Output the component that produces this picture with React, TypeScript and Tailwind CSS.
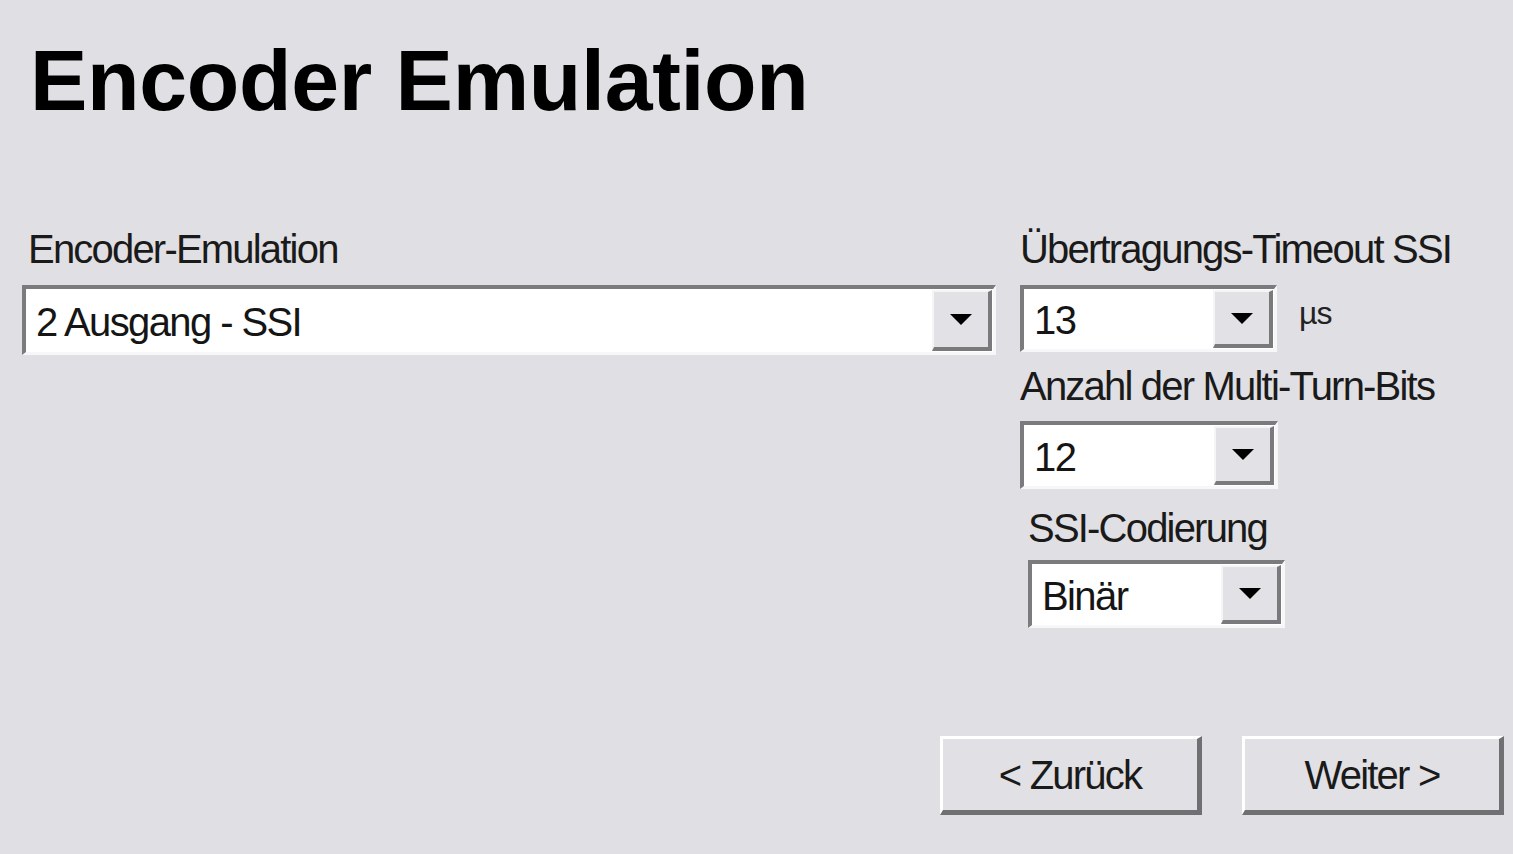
import React from 'react';

interface ComboProps {
    value: string;
    className?: string;
}

const Arrow: React.FC = () => (
    <svg width="24" height="13" viewBox="0 0 24 13">
        <polygon points="1,1 23,1 12,12" fill="#000" />
    </svg>
);

const Combo: React.FC<ComboProps> = ({ value, className = '' }) => {
    return (
        <div
            className={`flex bg-white border-t-[4px] border-l-[4px] border-b-[3px] border-r-[3px] border-t-[#7b7b7d] border-l-[#7b7b7d] border-b-[#f7f7f9] border-r-[#f7f7f9] ${className}`}
        >
            <div className="flex-1 flex items-center pl-[10px] pt-[2px] text-[40px] tracking-[-1.6px] leading-none text-[#151515]">
                {value}
            </div>
            <div className="w-[60px] my-[1px] mr-[1px] flex items-center justify-center bg-[#e2e1e5] border-t-[2px] border-l-[2px] border-t-[#f5f5f7] border-l-[#f5f5f7] border-b-[4px] border-r-[4px] border-b-[#7a7a7c] border-r-[#7a7a7c]">
                <Arrow />
            </div>
        </div>
    );
};

const Label: React.FC<{ children: React.ReactNode }> = ({ children }) => (
    <div className="h-[48px] leading-[48px] text-[40px] tracking-[-1.8px] text-[#1a1a1a] whitespace-nowrap">
        {children}
    </div>
);

const WizButton: React.FC<{ children: React.ReactNode }> = ({ children }) => (
    <button className="w-[262px] h-[79px] flex items-center justify-center bg-[#e1e0e4] border-t-[3px] border-l-[3px] border-t-white border-l-white border-b-[5px] border-r-[5px] border-b-[#707072] border-r-[#707072] text-[40px] tracking-[-1.8px] text-[#1a1a1a]">
        {children}
    </button>
);

const App: React.FC = () => {
    return (
        <div className="w-[1513px] h-[854px] overflow-hidden bg-[#e0dfe3] font-['Liberation_Sans',Arial,sans-serif] text-black">
            <h1 className="pl-[30px] pt-[36px] text-[86px] leading-[88px] font-bold tracking-[-0.3px]">
                Encoder Emulation
            </h1>

            <div className="flex pt-[101px] pl-[22px]">
                {/* left: main emulation select */}
                <div className="w-[974px]">
                    <div className="pl-[6px]">
                        <Label>Encoder-Emulation</Label>
                    </div>
                    <Combo value="2 Ausgang - SSI" className="mt-[12px] h-[70px]" />
                </div>

                {/* right: ssi settings */}
                <div className="ml-[24px] flex flex-col">
                    <Label>Übertragungs-Timeout SSI</Label>
                    <div className="mt-[12px] flex items-start">
                        <Combo value="13" className="w-[257px] h-[67px]" />
                        <span className="ml-[22px] mt-[12px] text-[32px] tracking-[-1px] leading-none text-[#222]">µs</span>
                    </div>

                    <div className="mt-[10px]">
                        <Label>Anzahl der Multi-Turn-Bits</Label>
                    </div>
                    <Combo value="12" className="mt-[11px] w-[258px] h-[68px]" />

                    <div className="pl-[8px] mt-[15px]">
                        <Label>SSI-Codierung</Label>
                        <Combo value="Binär" className="mt-[8px] w-[257px] h-[68px]" />
                    </div>
                </div>
            </div>

            <div className="flex justify-end gap-[40px] pr-[9px] pt-[108px]">
                <WizButton>&lt; Zurück</WizButton>
                <WizButton>Weiter &gt;</WizButton>
            </div>
        </div>
    );
};

export default App;
